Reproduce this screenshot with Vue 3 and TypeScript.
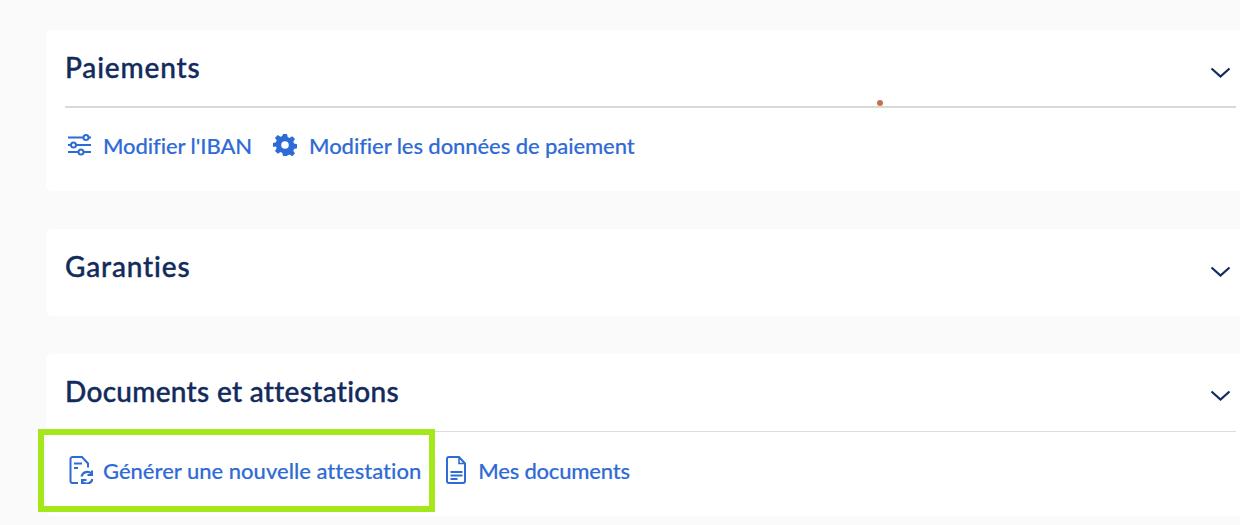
<script setup lang="ts">
interface Link { label: string; icon: string }
const paymentLinks: Link[] = [
  { label: "Modifier l'IBAN", icon: 'sliders' },
  { label: 'Modifier les données de paiement', icon: 'gear' },
]
</script>

<template>
  <main class="page">
    <section class="card first">
      <header class="head">
        <h2 class="spaced">Paiements</h2>
        <svg class="chev" width="20" height="12" viewBox="0 0 20 12"><path d="M1.500 1.500 10.500 9.500 19.500 1.500" fill="none" stroke="#122b5c" stroke-width="2.200" /></svg>
      </header>
      <div class="rule thick"><i class="dot"></i></div>
      <div class="links pay">
        <a v-for="l in paymentLinks" :key="l.label" class="link">
          <svg v-if="l.icon === 'sliders'" width="26" height="24" viewBox="0 0 26 24" fill="none" stroke="#2f6bd6" stroke-width="2">
            <path d="M1 4.500h15.500M21.500 4.500H24M1 12h3M9 12h15M1 19h10.500M16.500 19H24" />
            <circle cx="19" cy="4.500" r="2.500" /><circle cx="6.500" cy="12" r="2.500" /><circle cx="14" cy="19" r="2.500" />
          </svg>
          <svg v-else class="gear" width="24" height="24" viewBox="0 0 24 24">
            <path fill="#2f6bd6" fill-rule="evenodd" d="M10 1h4l.7 3.100 1.800.8 2.700-1.700 2.800 2.800-1.700 2.700.8 1.800 3.100.7v4l-3.100.7-.8 1.800 1.700 2.700-2.800 2.800-2.700-1.700-1.800.8L14 23h-4l-.7-3.100-1.800-.8-2.700 1.700-2.800-2.800 1.700-2.700-.8-1.800L-.2 14v-4l3.100-.7.8-1.800-1.700-2.700 2.800-2.800 2.700 1.700 1.800-.8zM12 8.200a3.800 3.800 0 1 0 0 7.600 3.800 3.800 0 0 0 0-7.600z" />
          </svg>
          <span>{{ l.label }}</span>
        </a>
      </div>
    </section>

    <section class="card">
      <header class="head">
        <h2 class="spaced">Garanties</h2>
        <svg class="chev" width="20" height="12" viewBox="0 0 20 12"><path d="M1.500 1.500 10.500 9.500 19.500 1.500" fill="none" stroke="#122b5c" stroke-width="2.200" /></svg>
      </header>
    </section>

    <section class="card last">
      <header class="head short">
        <h2>Documents et attestations</h2>
        <svg class="chev" width="20" height="12" viewBox="0 0 20 12"><path d="M1.500 1.500 10.500 9.500 19.500 1.500" fill="none" stroke="#122b5c" stroke-width="2.200" /></svg>
      </header>
      <div class="rule"></div>
      <div class="links docs">
        <a class="link gen">
          <svg width="26" height="28" viewBox="0 0 26 28" fill="none" stroke="#2f6bd6" stroke-width="2">
            <path d="M11 27H5.500a2 2 0 0 1-2-2V3a2 2 0 0 1 2-2h9.500l6 6.500v4" />
            <path d="M7 7.500h8M7 12h4" />
            <path d="M14.500 20.500a6 6 0 0 1 10-3M25.500 23a6 6 0 0 1-10 3" stroke-width="2.200" />
            <path d="M25 14.500v4.500h-4.500M15 28.500V24h4.500" stroke-width="2" />
          </svg>
          <span>Générer une nouvelle attestation</span>
        </a>
        <a class="link mes">
          <svg width="24" height="28" viewBox="0 0 24 28" fill="none" stroke="#2f6bd6" stroke-width="2">
            <path d="M5 27a2 2 0 0 1-2-2V3a2 2 0 0 1 2-2h10l6 6.500V25a2 2 0 0 1-2 2z" />
            <path d="M15 1.500V7.500h6" stroke-width="1.600" />
            <path d="M6.500 16h12M6.500 19.500h12M6.500 23h7" />
          </svg>
          <span>Mes documents</span>
        </a>
      </div>
      <div class="focus"></div>
    </section>
  </main>
</template>

<style>
html, body { margin: 0; background: #fafafa; overflow: hidden; }
</style>

<style scoped>
.page {
  height: 525px;
  padding: 30px 0 0 46px;
  box-sizing: border-box;
  display: flex;
  flex-direction: column;
  gap: 38px;
  font-family: Lato, "Liberation Sans", sans-serif;
  font-variant-ligatures: none;
  overflow: hidden;
}
.card {
  position: relative;
  background: #fff;
  border-radius: 6px 0 0 6px;
  padding: 0 4px 0 19px;
  height: 87px;
  flex: none;
}
.card.first { height: 161px; }
.card.last { height: 162px; }
.head {
  height: 76px;
  display: flex;
  align-items: center;
  justify-content: space-between;
  padding-right: 6px;
}
.head.short { height: 77px; }
h2 {
  margin: -4px 0 0;
  font-size: 28px;
  font-weight: 500;
  letter-spacing: 0.3px;
  color: #122b5c;
  line-height: 1;
  -webkit-text-stroke: 0.4px #122b5c;
}
h2.spaced { margin-top: -2px; letter-spacing: 0.85px; }
.chev { margin-top: 10px; }
.head.short .chev { margin-top: 6px; }
.rule { position: relative; height: 1px; background: #ddd; }
.rule.thick { height: 2px; background: #d9d9d9; }
.dot {
  position: absolute;
  left: 812px;
  top: -6px;
  width: 6px;
  height: 6px;
  border-radius: 50%;
  background: #c4704f;
}
.links { display: flex; align-items: center; }
.pay { gap: 21px; height: 78px; padding: 0 0 4px 2px; box-sizing: border-box; letter-spacing: -0.08px; }
.docs { gap: 23px; height: 80px; padding: 0 0 4px 2px; box-sizing: border-box; }
.link {
  display: flex;
  align-items: center;
  gap: 10px;
  color: #2f6bd6;
  font-size: 22px;
  font-weight: 500;
  -webkit-text-stroke: 0.15px #2f6bd6;
}
.mes { letter-spacing: -0.2px; }
.gear { margin-right: 2px; }
.focus {
  position: absolute;
  left: -8px;
  top: 75px;
  width: 385px;
  height: 71px;
  border: 6px solid #a4e81c;
  pointer-events: none;
}
</style>
